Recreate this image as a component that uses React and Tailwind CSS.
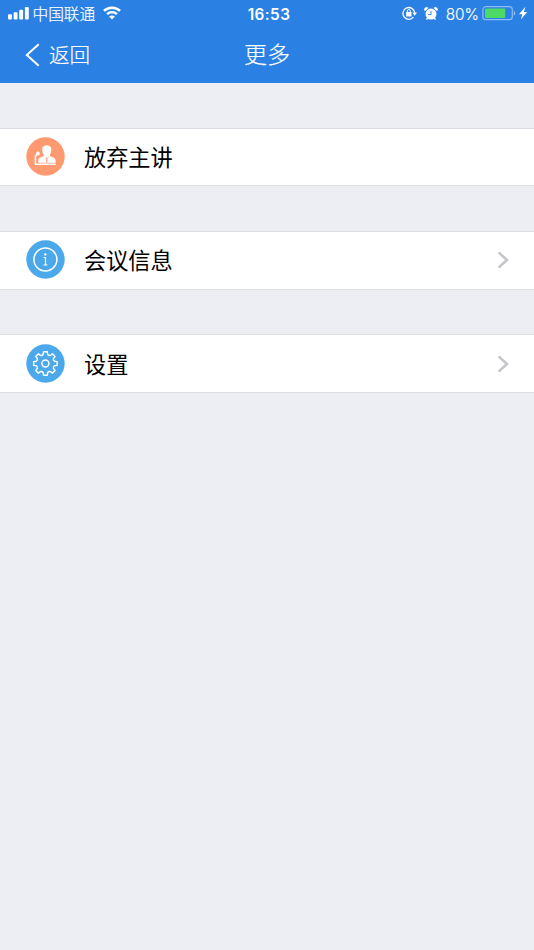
const GEAR_TEETH = 8;

// Outline of a cog: each tooth is a flat-topped bump on the inner circle.
function gearPath(cx, cy, inner, outer) {
  const points = [];
  for (let i = 0; i < GEAR_TEETH; i++) {
    const mid = (i * 360) / GEAR_TEETH - 90;
    for (const [offset, r] of [[-14, inner], [-9, outer], [9, outer], [14, inner]]) {
      const a = ((mid + offset) * Math.PI) / 180;
      points.push([cx + r * Math.cos(a), cy + r * Math.sin(a)]);
    }
  }
  // The valleys between teeth curve inwards.
  const valley = 2.6;
  return (
    points
      .map(([x, y], i) => {
        const p = `${x.toFixed(2)} ${y.toFixed(2)}`;
        if (i === 0) return `M${p}`;
        return i % 4 === 0 ? `A${valley} ${valley} 0 0 0 ${p}` : `L${p}`;
      })
      .join(" ") + ` A${valley} ${valley} 0 0 0 ${points[0][0].toFixed(2)} ${points[0][1].toFixed(2)}Z`
  );
}

function StatusBar() {
  return (
    <div className="grid h-[27px] grid-cols-[1fr_auto_1fr] items-center">
      <div className="flex items-center pl-2">
        <svg className="h-[13px] w-[21px]" viewBox="0 0 21 13" fill="white">
          <rect x="0" y="7.2" width="3.9" height="5.3" rx="1" />
          <rect x="5.6" y="5.2" width="3.9" height="7.3" rx="1" />
          <rect x="11.2" y="2.8" width="3.9" height="9.7" rx="1" />
          <rect x="16.9" y="0" width="3.9" height="12.5" rx="1" />
        </svg>
        <span className="ml-[3.5px] pt-px text-[15.7px] leading-none font-light [-webkit-text-stroke:0.2px_white]">中国联通</span>
        <svg className="ml-2 h-[14px] w-[18px]" viewBox="0 0 18 14" fill="none" stroke="white">
          <path d="M1 4.9C5.3.7 12.7.7 17 4.9" strokeWidth="2.6" />
          <path d="M4.1 8.1c2.7-2.6 7.1-2.6 9.8 0" strokeWidth="2.4" />
          <path d="M9 13.4 6.1 10.6c1.5-1.5 4.3-1.5 5.8 0z" fill="white" stroke="none" />
        </svg>
      </div>
      <time className="ml-1 pt-[2px] font-['Inter'] text-[15.3px] leading-none font-semibold tracking-[0.45px]">16:53</time>
      <div className="flex items-center justify-end pr-[6px]">
        <svg className="mb-px h-[14px] w-[15px]" viewBox="0 0 15 14" fill="none" stroke="white" strokeWidth="1.3">
          <path d="M11.4 11.2A5.9 5.9 0 1 1 12.7 6.6" />
          <path d="M10.3 6.5h4.7l-2.4 3.2z" fill="white" stroke="none" />
          <rect x="4.1" y="6.1" width="5.4" height="4.3" rx=".5" fill="white" stroke="none" />
          <path d="M5.3 6.2V5a1.5 1.5 0 0 1 3 0v1.2" strokeWidth="1" />
        </svg>
        <svg className="ml-[7px] h-[14px] w-[14px]" viewBox="0 0 14 14" fill="white">
          <path d="M.9 4.2A2.1 2.1 0 0 1 4.4 1z M13.1 4.2A2.1 2.1 0 0 0 9.6 1z" />
          <path d="m3.6 10.9-1 1.7M10.4 10.9l1 1.7" stroke="white" strokeWidth="1.4" />
          <circle cx="7" cy="7.1" r="5.5" />
          <path d="M7 4v3.6H4.2" fill="none" stroke="#2b81e3" strokeWidth="1" />
        </svg>
        <span className="ml-2 pt-[2px] font-['Inter'] text-[15.4px] leading-none font-light [-webkit-text-stroke:0.15px_white]">80%</span>
        <svg className="ml-[3px] h-[15px] w-[34px]" viewBox="0 0 34 15">
          <rect x=".9" y=".7" width="29.4" height="13" rx="3" fill="none" stroke="#8dbbf1" strokeWidth="1.2" />
          <rect x="3" y="2.5" width="20.2" height="9.4" rx=".8" fill="#4cd964" />
          <path d="M31.8 4.8c2 .8 2 4.2 0 5z" fill="#8dbbf1" />
        </svg>
        <svg className="ml-[3px] h-[15px] w-[9px]" viewBox="0 0 9 15" fill="white">
          <path d="M6.4.8 0 8.3h3.4L1.8 13.6 8.2 6H4.8z" />
        </svg>
      </div>
    </div>
  );
}

function SpeakerIcon() {
  return (
    <svg className="size-[39px] shrink-0" viewBox="0 0 39 39">
      <circle cx="19.5" cy="19.5" r="19.2" fill="#ff9a70" />
      <g fill="white">
        <path d="M16.2 12c0-4.9 9.1-4.9 9.1 0 0 2.8-.5 4.3-1.4 5.4v1.7c1.3 1.1 5.3 1.4 5.7 3.9v3.2H12.3V23c.4-2.5 4-2.8 5.3-3.9v-1.7c-.9-1.1-1.4-2.6-1.4-5.4z" />
        <circle cx="11.9" cy="16.4" r="1.9" />
      </g>
      <path d="m11.9 16.4-2.5 2.8v8h20.2" fill="none" stroke="white" strokeWidth="1.5" />
      <path d="M20.8 21v4.6" stroke="#ff9a70" strokeWidth="1.1" />
      <path d="m18.9 20.2 1.9 1.1 1.9-1.1" fill="none" stroke="#ff9a70" strokeWidth=".5" />
      <path d="M12.3 25.9h17.3" stroke="#ff9a70" strokeWidth=".4" />
    </svg>
  );
}

function InfoIcon() {
  return (
    <svg className="size-[39px] shrink-0" viewBox="0 0 39 39">
      <circle cx="19.5" cy="19.5" r="19.2" fill="#4aa8eb" />
      <circle cx="19.4" cy="19.5" r="11.5" fill="none" stroke="white" strokeWidth="1.5" />
      <circle cx="19.3" cy="14.4" r="1.2" fill="white" />
      <path d="M17.6 17.5h1.9v7.5M17.5 25h3.9" fill="none" stroke="white" strokeWidth="1.2" />
    </svg>
  );
}

function GearIcon() {
  return (
    <svg className="size-[39px] shrink-0" viewBox="0 0 39 39">
      <circle cx="19.5" cy="19.5" r="19.2" fill="#4aa8eb" />
      <g fill="none" stroke="white" strokeWidth="1.45" strokeLinejoin="round">
        <path d={gearPath(19.4, 19.5, 9.3, 11.9)} />
        <circle cx="19.4" cy="19.5" r="3.5" />
      </g>
    </svg>
  );
}

function Row({ icon, label, chevron }) {
  return (
    <button className="flex h-[58.4px] w-full items-center border-y border-[#dcdde2] bg-white pr-[25px] pb-px pl-[26px] text-left">
      {icon}
      <span className="ml-[19px] flex-1 pb-[0.6px] text-[22.2px] leading-none text-black">{label}</span>
      {chevron && (
        <svg className="mt-px h-[18px] w-[12px]" viewBox="0 0 12 18" fill="none" stroke="#c4c5c9" strokeWidth="2.5">
          <path d="m1.6 1.3 8.4 7.7-8.4 7.7" />
        </svg>
      )}
    </button>
  );
}

export default function App() {
  return (
    <div className="min-h-screen bg-[#edeef3] font-['Noto_Sans_CJK_SC',sans-serif]">
      <header className="h-[83px] bg-[#2b81e3] text-white">
        <StatusBar />
        <nav className="grid h-[55px] grid-cols-[1fr_auto_1fr] items-center">
          <button className="flex items-center pl-[25px]">
            <svg className="h-[24px] w-[15px]" viewBox="0 0 15 24" fill="none" stroke="white" strokeWidth="2">
              <path d="M13.7 1.2 1.8 12l11.9 10.8" />
            </svg>
            <span className="ml-[9px] text-[20.5px] leading-none font-light [-webkit-text-stroke:0.2px_white]">返回</span>
          </button>
          <h1 className="pb-[3px] text-[23px] leading-none font-light [-webkit-text-stroke:0.2px_white]">更多</h1>
        </nav>
      </header>
      <main className="flex flex-col gap-[44.8px] pt-[45px]">
        <Row icon={<SpeakerIcon />} label="放弃主讲" />
        <Row icon={<InfoIcon />} label="会议信息" chevron />
        <Row icon={<GearIcon />} label="设置" chevron />
      </main>
    </div>
  );
}
